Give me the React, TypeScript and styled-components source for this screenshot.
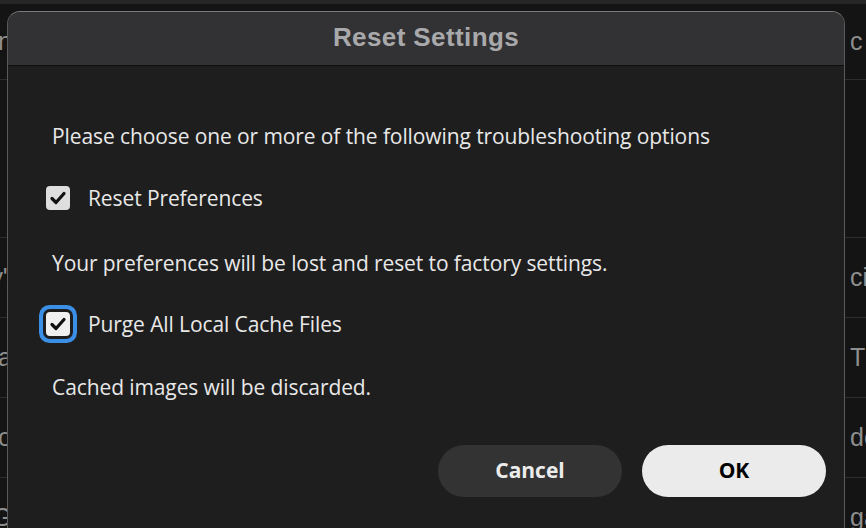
import React from "react";
import styled, { createGlobalStyle } from "styled-components";

const Global = createGlobalStyle`
  html, body { margin: 0; padding: 0; background: #141414; }
  body { width: 866px; height: 528px; overflow: hidden; font-family: "Open Sans", "Noto Sans", sans-serif; }
  #root { position: relative; width: 866px; height: 528px; overflow: hidden; }
`;

const Page = styled.div`
  position: relative;
  width: 866px;
  height: 528px;
  background: #141414;
  overflow: hidden;
`;

const TopStrip = styled.div`
  height: 4px;
  background: #262626;
`;

const Row = styled.div<{ $h: number }>`
  height: ${(p) => p.$h}px;
  display: flex;
  align-items: center;
  justify-content: space-between;
  border-bottom: 1px solid #2c2c2c;
  box-sizing: border-box;
  font-family: "Liberation Sans", Arial, sans-serif;
  font-size: 25px;
  color: #8e8e8e;
`;

const LeftCell = styled.div`
  width: 12px;
  overflow: hidden;
  display: flex;
  justify-content: flex-end;
  white-space: nowrap;
`;

const RightCell = styled.div`
  width: 16px;
  overflow: hidden;
  white-space: nowrap;
`;

const Dialog = styled.div`
  position: absolute;
  left: 7px;
  top: 11px;
  width: 838px;
  height: 540px;
  box-sizing: border-box;
  border: 1.5px solid #5a5a5a;
  border-top-color: #7a7a7a;
  border-radius: 13px;
  background: #1e1e1e;
  overflow: hidden;
  display: flex;
  flex-direction: column;
`;

const Header = styled.div`
  height: 54px;
  flex: none;
  background: #323234;
  border-bottom: 1.5px solid #0e0e0e;
  display: flex;
  align-items: center;
  justify-content: center;
  padding-bottom: 3px;
  box-sizing: border-box;
`;

const Title = styled.h1`
  margin: 0;
  font-family: "Liberation Sans", Arial, sans-serif;
  font-weight: 700;
  font-size: 26px;
  color: #a9a9ab;
  letter-spacing: 0.4px;
`;

const Body = styled.div`
  display: flex;
  flex-direction: column;
  padding: 57px 45px 0 44px;
`;

const Text = styled.p<{ $mt?: number }>`
  margin: ${(p) => p.$mt ?? 0}px 0 0 0;
  line-height: 26px;
  font-size: 21px;
  color: #e8e8e8;
  letter-spacing: -0.1px;
`;

const CheckRow = styled.label<{ $mt: number }>`
  margin-top: ${(p) => p.$mt}px;
  margin-left: -6px;
  display: flex;
  align-items: center;
  gap: 18px;
  height: 26px;
  font-size: 21px;
  color: #e8e8e8;
  letter-spacing: -0.1px;
`;

const Box = styled.span<{ $focus?: boolean }>`
  width: 24px;
  height: 24px;
  flex: none;
  border-radius: 4px;
  background: ${(p) => (p.$focus ? "#f0f0f0" : "#dedede")};
  display: flex;
  align-items: center;
  justify-content: center;
  box-shadow: ${(p) => (p.$focus ? "0 0 0 3px #1e1e1e, 0 0 0 7px #3b8fe6" : "none")};
`;

const Buttons = styled.div`
  margin-top: 45px;
  display: flex;
  justify-content: flex-end;
  gap: 20px;
  margin-right: -27px;
`;

const Button = styled.button<{ $primary?: boolean }>`
  width: 184px;
  height: 52px;
  border: none;
  border-radius: 26px;
  background: ${(p) => (p.$primary ? "#ebebeb" : "#333333")};
  color: ${(p) => (p.$primary ? "#000000" : "#ececec")};
  font-family: "Open Sans", "Noto Sans", sans-serif;
  font-weight: 700;
  font-size: 21px;
  padding: 0 0 3px 0;
  cursor: pointer;
`;

const Check = () => (
  <svg width="18" height="18" viewBox="0 0 18 18">
    <path d="M3 9.5 L7 13.5 L15 4.5" fill="none" stroke="#111" strokeWidth="3.2" strokeLinecap="round" strokeLinejoin="round" />
  </svg>
);

const rows: { h: number; l: string; r: string }[] = [
  { h: 76, l: "Design", r: "c" },
  { h: 158, l: "", r: "" },
  { h: 80, l: "ry\"", r: "ci" },
  { h: 80, l: "Data", r: "Th" },
  { h: 80, l: "Into", r: "de" },
  { h: 80, l: "G", r: "ga" },
];

export default function App() {
  return (
    <Page>
      <Global />
      <TopStrip />
      {rows.map((r, i) => (
        <Row key={i} $h={r.h}>
          <LeftCell>
            <span>{r.l}</span>
          </LeftCell>
          <RightCell>{r.r}</RightCell>
        </Row>
      ))}
      <Dialog>
        <Header>
          <Title>Reset Settings</Title>
        </Header>
        <Body>
          <Text>Please choose one or more of the following troubleshooting options</Text>
          <CheckRow $mt={36}>
            <Box>
              <Check />
            </Box>
            Reset Preferences
          </CheckRow>
          <Text $mt={39}>Your preferences will be lost and reset to factory settings.</Text>
          <CheckRow $mt={35}>
            <Box $focus>
              <Check />
            </Box>
            Purge All Local Cache Files
          </CheckRow>
          <Text $mt={37}>Cached images will be discarded.</Text>
          <Buttons>
            <Button>Cancel</Button>
            <Button $primary>OK</Button>
          </Buttons>
        </Body>
      </Dialog>
    </Page>
  );
}
